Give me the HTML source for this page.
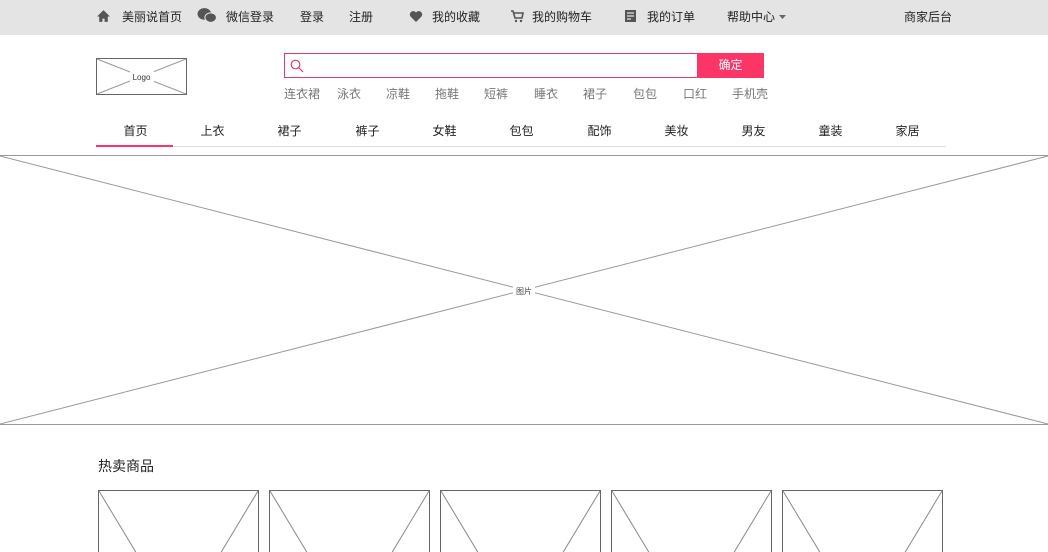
<!DOCTYPE html>
<html><head><meta charset="utf-8"><style>
*{margin:0;padding:0;box-sizing:border-box}
html{overflow:hidden}
body{width:1048px;height:552px;overflow:hidden;background:#fff;font-family:"Liberation Sans","Noto Sans CJK SC",sans-serif;font-size:12px;color:#333;position:relative}
.top{position:absolute;left:0;top:0;width:1048px;height:35px;background:#e4e4e4}
.t{position:absolute;top:8px;font-size:12px;color:#222;white-space:nowrap}
.ab{position:absolute}
.hot{position:absolute;top:85px;font-size:12px;color:#777;white-space:nowrap}
.nav{position:absolute;top:122px;width:77px;text-align:center;font-size:12px;color:#222}
</style></head><body>
<div class="top"></div>
<svg class="ab" style="left:96px;top:9px" width="15" height="14" viewBox="0 0 14 13"><path d="M7 1L1 7h2v5h3V9h2v3h3V7h2z" fill="#555"/></svg>
<span class="t" style="left:122px">美丽说首页</span>
<svg class="ab" style="left:197px;top:7px" width="20" height="17" viewBox="0 0 19 16"><ellipse cx="7" cy="6.5" rx="6.5" ry="5.5" fill="#555"/><ellipse cx="13" cy="10" rx="5.5" ry="4.5" fill="#555" stroke="#e4e4e4" stroke-width="1"/></svg>
<span class="t" style="left:226px">微信登录</span>
<span class="t" style="left:300px">登录</span>
<span class="t" style="left:349px">注册</span>
<svg class="ab" style="left:409px;top:10px" width="14" height="13" viewBox="0 0 14 13"><path d="M7 12L1.5 6.5A3 3 0 0 1 7 2.5A3 3 0 0 1 12.5 6.5z" fill="#555"/></svg>
<span class="t" style="left:432px">我的收藏</span>
<svg class="ab" style="left:510px;top:9px" width="14" height="14" viewBox="0 0 14 14"><path d="M1 2h2l2 7h7l1-5H4" fill="none" stroke="#555" stroke-width="1.6"/><circle cx="6" cy="12" r="1.2" fill="#555"/><circle cx="11" cy="12" r="1.2" fill="#555"/></svg>
<span class="t" style="left:532px">我的购物车</span>
<svg class="ab" style="left:625px;top:10px" width="11" height="12" viewBox="0 0 11 12"><rect width="11" height="12" fill="#555"/><path d="M2 3h7M2 6h7M2 9h4" stroke="#e4e4e4" stroke-width="1.2"/></svg>
<span class="t" style="left:647px">我的订单</span>
<span class="t" style="left:727px">帮助中心</span>
<svg class="ab" style="left:779px;top:15px" width="7" height="4"><path d="M0 0h7L3.5 4z" fill="#666"/></svg>
<span class="t" style="left:904px">商家后台</span>

<svg class="ab" style="left:96px;top:58px" width="91" height="37"><rect x=".5" y=".5" width="90" height="36" fill="#fff" stroke="#666"/><path d="M1 1L90 36M90 1L1 36" stroke="#999"/><rect x="34" y="13" width="24" height="11" fill="#fff"/><text x="45.5" y="22" font-size="8" text-anchor="middle" fill="#333" font-family="Liberation Sans">Logo</text></svg>

<div class="ab" style="left:284px;top:53px;width:480px;height:25px;border:1px solid #e8386a"></div>
<div class="ab" style="left:697px;top:53px;width:67px;height:25px;background:#fc3567;color:#fff;font-size:12px;text-align:center;line-height:25px">确定</div>
<svg class="ab" style="left:290px;top:59px" width="14" height="14" viewBox="0 0 14 14"><circle cx="5.5" cy="5.5" r="4.3" fill="none" stroke="#e8386a" stroke-width="1.2"/><path d="M8.5 8.5L13 13" stroke="#e8386a" stroke-width="1.2"/></svg>
<span class="hot" style="left:284px">连衣裙</span><span class="hot" style="left:337px">泳衣</span><span class="hot" style="left:386px">凉鞋</span><span class="hot" style="left:435px">拖鞋</span><span class="hot" style="left:484px">短裤</span><span class="hot" style="left:534px">睡衣</span><span class="hot" style="left:583px">裙子</span><span class="hot" style="left:633px">包包</span><span class="hot" style="left:683px">口红</span><span class="hot" style="left:732px">手机壳</span>

<span class="nav" style="left:97px">首页</span><span class="nav" style="left:174px">上衣</span><span class="nav" style="left:251px">裙子</span><span class="nav" style="left:329px">裤子</span><span class="nav" style="left:406px">女鞋</span><span class="nav" style="left:483px">包包</span><span class="nav" style="left:561px">配饰</span><span class="nav" style="left:638px">美妆</span><span class="nav" style="left:715px">男友</span><span class="nav" style="left:792px">童装</span><span class="nav" style="left:869px">家居</span>
<div class="ab" style="left:96px;top:146px;width:850px;height:1px;background:#ddd"></div>
<div class="ab" style="left:96px;top:145px;width:77px;height:2px;background:#fc3567"></div>

<svg class="ab" style="left:0;top:154px" width="1048" height="272"><path d="M0 1.5H1048M0 270.5H1048" stroke="#999"/><path d="M0 2L1048 270M1048 2L0 270" stroke="#999"/><rect x="513" y="130" width="22" height="12" fill="#fff"/><text x="524" y="140" font-size="8" text-anchor="middle" fill="#444" font-family="Noto Sans CJK SC">图片</text></svg>

<div class="ab" style="left:98px;top:456px;font-size:14px;color:#222">热卖商品</div>
<svg class="ab" style="left:0;top:490px" width="1048" height="62">
<g stroke="#666" fill="none">
<g transform="translate(98,0)"><rect x=".5" y=".5" width="160" height="270"/><path d="M1 1L160 265M160 1L1 265" stroke="#888"/></g>
<g transform="translate(269,0)"><rect x=".5" y=".5" width="160" height="270"/><path d="M1 1L160 265M160 1L1 265" stroke="#888"/></g>
<g transform="translate(440,0)"><rect x=".5" y=".5" width="160" height="270"/><path d="M1 1L160 265M160 1L1 265" stroke="#888"/></g>
<g transform="translate(611,0)"><rect x=".5" y=".5" width="160" height="270"/><path d="M1 1L160 265M160 1L1 265" stroke="#888"/></g>
<g transform="translate(782,0)"><rect x=".5" y=".5" width="160" height="270"/><path d="M1 1L160 265M160 1L1 265" stroke="#888"/></g>
</g></svg>
</body></html>
